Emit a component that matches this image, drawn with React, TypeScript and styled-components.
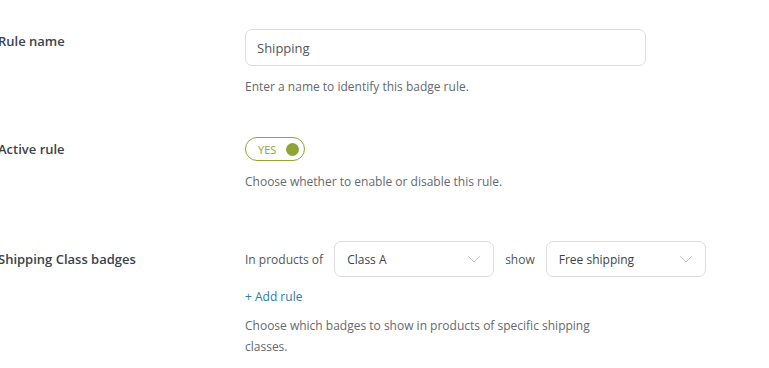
import React from "react";
import styled, { createGlobalStyle } from "styled-components";

const GlobalStyle = createGlobalStyle`
  html, body {
    margin: 0;
    padding: 0;
    background: #ffffff;
  }
  body {
    font-family: "Open Sans", "Noto Sans", "Liberation Sans", sans-serif;
    color: #3c434a;
  }
`;

const Page = styled.div`
  width: 769px;
  height: 368px;
  overflow: hidden;
  margin-left: -2px;
`;

const Row = styled.div<{ $top: number }>`
  display: grid;
  grid-template-columns: 247px 1fr;
  padding-top: ${(p) => p.$top}px;
`;

const Label = styled.div<{ $offset: number }>`
  font-size: 13px;
  font-weight: 600;
  line-height: 21px;
  color: #3c434a;
  margin-top: ${(p) => p.$offset}px;
`;

const Field = styled.div`
  display: flex;
  flex-direction: column;
  align-items: flex-start;
`;

const TextInput = styled.div`
  box-sizing: border-box;
  width: 401px;
  height: 37px;
  border: 1px solid #dcdcde;
  border-radius: 7px;
  padding: 0 11px;
  display: flex;
  align-items: center;
  font-size: 13px;
  color: #50575e;
`;

const Description = styled.p<{ $gap: number }>`
  margin: ${(p) => p.$gap}px 0 0;
  max-width: 370px;
  font-size: 12px;
  line-height: 21px;
  color: #646970;
`;

const Toggle = styled.div`
  box-sizing: border-box;
  width: 60px;
  height: 24px;
  border: 1px solid #8fa33a;
  border-radius: 12px;
  display: flex;
  align-items: center;
  justify-content: space-between;
  padding: 0 5px 0 12px;
  font-size: 11px;
  color: #8fa33a;
`;

const Knob = styled.span`
  width: 13px;
  height: 13px;
  border-radius: 50%;
  background: #8fa33a;
`;

const RuleLine = styled.div`
  display: flex;
  align-items: center;
  gap: 11px;
  font-size: 12px;
  color: #50575e;
`;

const Select = styled.div`
  box-sizing: border-box;
  width: 160px;
  height: 36px;
  border: 1px solid #dcdcde;
  border-radius: 7px;
  padding: 0 12px;
  display: flex;
  align-items: center;
  justify-content: space-between;
  font-size: 12px;
  color: #3c434a;
`;

const AddLink = styled.a`
  margin-top: 9px;
  font-size: 12px;
  line-height: 21px;
  color: #2c7aa8;
  text-decoration: none;
`;

const Chevron = () => (
  <svg width="14" height="8" viewBox="0 0 14 8" fill="none">
    <path d="M1 1l6 6 6-6" stroke="#c8cace" strokeWidth="1" />
  </svg>
);

const RuleSelect = ({ value }: { value: string }) => (
  <Select>
    <span>{value}</span>
    <Chevron />
  </Select>
);

export default function App() {
  return (
    <>
      <GlobalStyle />
      <Page>
        <Row $top={29}>
          <Label $offset={2}>Rule name</Label>
          <Field>
            <TextInput>Shipping</TextInput>
            <Description $gap={10}>Enter a name to identify this badge rule.</Description>
          </Field>
        </Row>
        <Row $top={40}>
          <Label $offset={2}>Active rule</Label>
          <Field>
            <Toggle>
              <span>YES</span>
              <Knob />
            </Toggle>
            <Description $gap={10}>Choose whether to enable or disable this rule.</Description>
          </Field>
        </Row>
        <Row $top={49}>
          <Label $offset={8}>Shipping Class badges</Label>
          <Field>
            <RuleLine>
              <span>In products of</span>
              <RuleSelect value="Class A" />
              <span>show</span>
              <RuleSelect value="Free shipping" />
            </RuleLine>
            <AddLink href="#">+ Add rule</AddLink>
            <Description $gap={8}>
              Choose which badges to show in products of specific shipping classes.
            </Description>
          </Field>
        </Row>
      </Page>
    </>
  );
}
